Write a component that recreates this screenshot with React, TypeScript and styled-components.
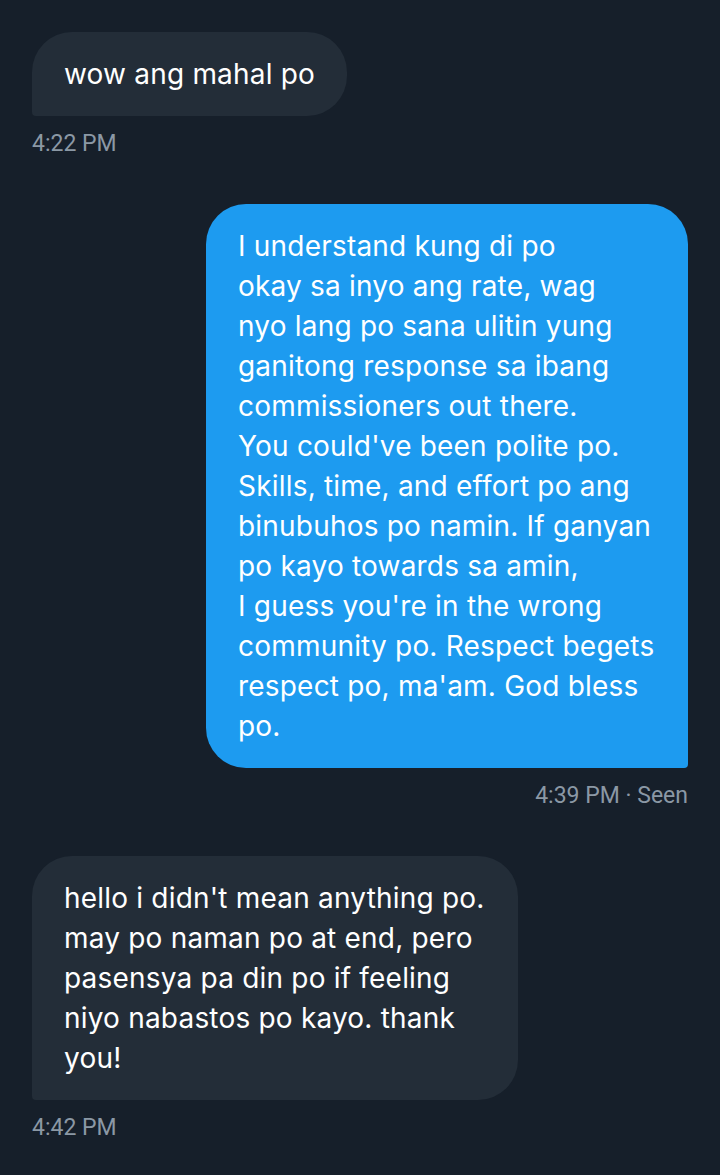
import React from "react";
import styled, { createGlobalStyle } from "styled-components";

const GlobalStyle = createGlobalStyle`
  html, body {
    margin: 0;
    padding: 0;
    background: #161f2a;
  }
`;

const Page = styled.div`
  min-height: 1175px;
  box-sizing: border-box;
  background: #161f2a;
  padding: 32px 32px 0;
  display: flex;
  flex-direction: column;
  gap: 48px;
`;

const MessageGroup = styled.div<{ $sent?: boolean }>`
  display: flex;
  flex-direction: column;
  align-items: ${(props) => (props.$sent ? "flex-end" : "flex-start")};
`;

const Bubble = styled.div<{ $sent?: boolean; $width?: number }>`
  box-sizing: border-box;
  width: ${(props) => (props.$width ? `${props.$width}px` : "auto")};
  padding: 22px 32px;
  background: ${(props) => (props.$sent ? "#1d9bf0" : "#232d38")};
  color: #ffffff;
  border-radius: ${(props) => (props.$sent ? "40px 40px 4px 40px" : "40px 40px 40px 4px")};
  font-family: Inter, "Noto Sans", sans-serif;
  font-size: 28px;
  letter-spacing: 0.2px;
  line-height: 40px;
  white-space: pre;
`;

const Timestamp = styled.div`
  margin-top: 16px;
  font-family: Roboto, "Liberation Sans", sans-serif;
  font-size: 23px;
  line-height: 24px;
  color: #8b98a5;
`;

const messages = [
  {
    sent: false,
    text: "wow ang mahal po",
    time: "4:22 PM",
  },
  {
    sent: true,
    width: 482,
    text: [
      "I understand kung di po",
      "okay sa inyo ang rate, wag",
      "nyo lang po sana ulitin yung",
      "ganitong response sa ibang",
      "commissioners out there.",
      "You could've been polite po.",
      "Skills, time, and effort po ang",
      "binubuhos po namin. If ganyan",
      "po kayo towards sa amin,",
      "I guess you're in the wrong",
      "community po. Respect begets",
      "respect po, ma'am. God bless",
      "po.",
    ].join("\n"),
    time: "4:39 PM · Seen",
  },
  {
    sent: false,
    width: 486,
    text: [
      "hello i didn't mean anything po.",
      "may po naman po at end, pero",
      "pasensya pa din po if feeling",
      "niyo nabastos po kayo. thank",
      "you!",
    ].join("\n"),
    time: "4:42 PM",
  },
];

const App: React.FC = () => {
  return (
    <>
      <GlobalStyle />
      <Page>
        {messages.map((m, i) => (
          <MessageGroup key={i} $sent={m.sent}>
            <Bubble $sent={m.sent} $width={m.width}>
              {m.text}
            </Bubble>
            <Timestamp>{m.time}</Timestamp>
          </MessageGroup>
        ))}
      </Page>
    </>
  );
};

export default App;
